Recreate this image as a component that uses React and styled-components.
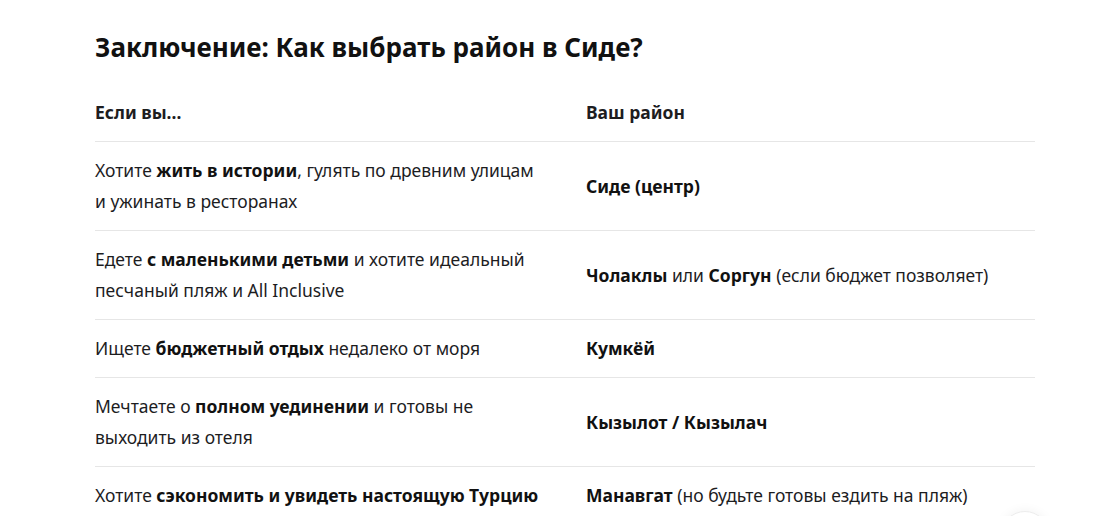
import React from "react";
import styled, { createGlobalStyle } from "styled-components";

const Global = createGlobalStyle`
  html, body { margin: 0; padding: 0; background: #fff; }
  body { font-family: "Noto Sans", "Open Sans", sans-serif; color: #1d1d1f; }
`;

const Page = styled.main`
  padding: 30px 73px 0 95px;
`;

const Title = styled.h2`
  margin: 0 0 20px;
  font-size: 26px;
  line-height: 34px;
  font-weight: 700;
  color: #111;
`;

const Table = styled.div`
  display: grid;
  grid-template-columns: 491px 1fr;
`;

const Cell = styled.div`
  padding: 13px ${(p) => (p.$first ? "41px" : "0")} 13px 0;
  font-size: 17.5px;
  line-height: 31px;
  border-bottom: 1px solid #e6e6e6;
  display: flex;
  align-items: center;
  font-weight: ${(p) => (p.$head ? 700 : 400)};
  color: #1d1d1f;
  b { font-weight: 700; color: #111; }
`;

const Fab = styled.div`
  position: fixed;
  left: 1001px;
  top: 511px;
  width: 46px;
  height: 46px;
  border-radius: 50%;
  border: 1px solid #ececec;
  background: #fff;
  box-shadow: 0 0 12px rgba(0, 0, 0, 0.06);
`;

const rows = [
  [
    <>Хотите <b>жить в истории</b>, гулять по древним улицам и ужинать в ресторанах</>,
    <><b>Сиде (центр)</b></>,
  ],
  [
    <>Едете <b>с маленькими детьми</b> и хотите идеальный песчаный пляж и All Inclusive</>,
    <><b>Чолаклы</b> или <b>Соргун</b> (если бюджет позволяет)</>,
  ],
  [
    <>Ищете <b>бюджетный отдых</b> недалеко от моря</>,
    <><b>Кумкёй</b></>,
  ],
  [
    <>Мечтаете о <b>полном уединении</b> и готовы не выходить из отеля</>,
    <><b>Кызылот / Кызылач</b></>,
  ],
  [
    <>Хотите <b>сэкономить и увидеть настоящую Турцию</b></>,
    <><b>Манавгат</b> (но будьте готовы ездить на пляж)</>,
  ],
];

export default function App() {
  return (
    <>
      <Global />
      <Page>
        <Title>Заключение: Как выбрать район в Сиде?</Title>
        <Table>
          <Cell $first $head>Если вы...</Cell>
          <Cell $head>Ваш район</Cell>
          {rows.map((r, i) => (
            <React.Fragment key={i}>
              <Cell $first>
                <span>{r[0]}</span>
              </Cell>
              <Cell>
                <span>{r[1]}</span>
              </Cell>
            </React.Fragment>
          ))}
        </Table>
      </Page>
      <Fab />
    </>
  );
}
